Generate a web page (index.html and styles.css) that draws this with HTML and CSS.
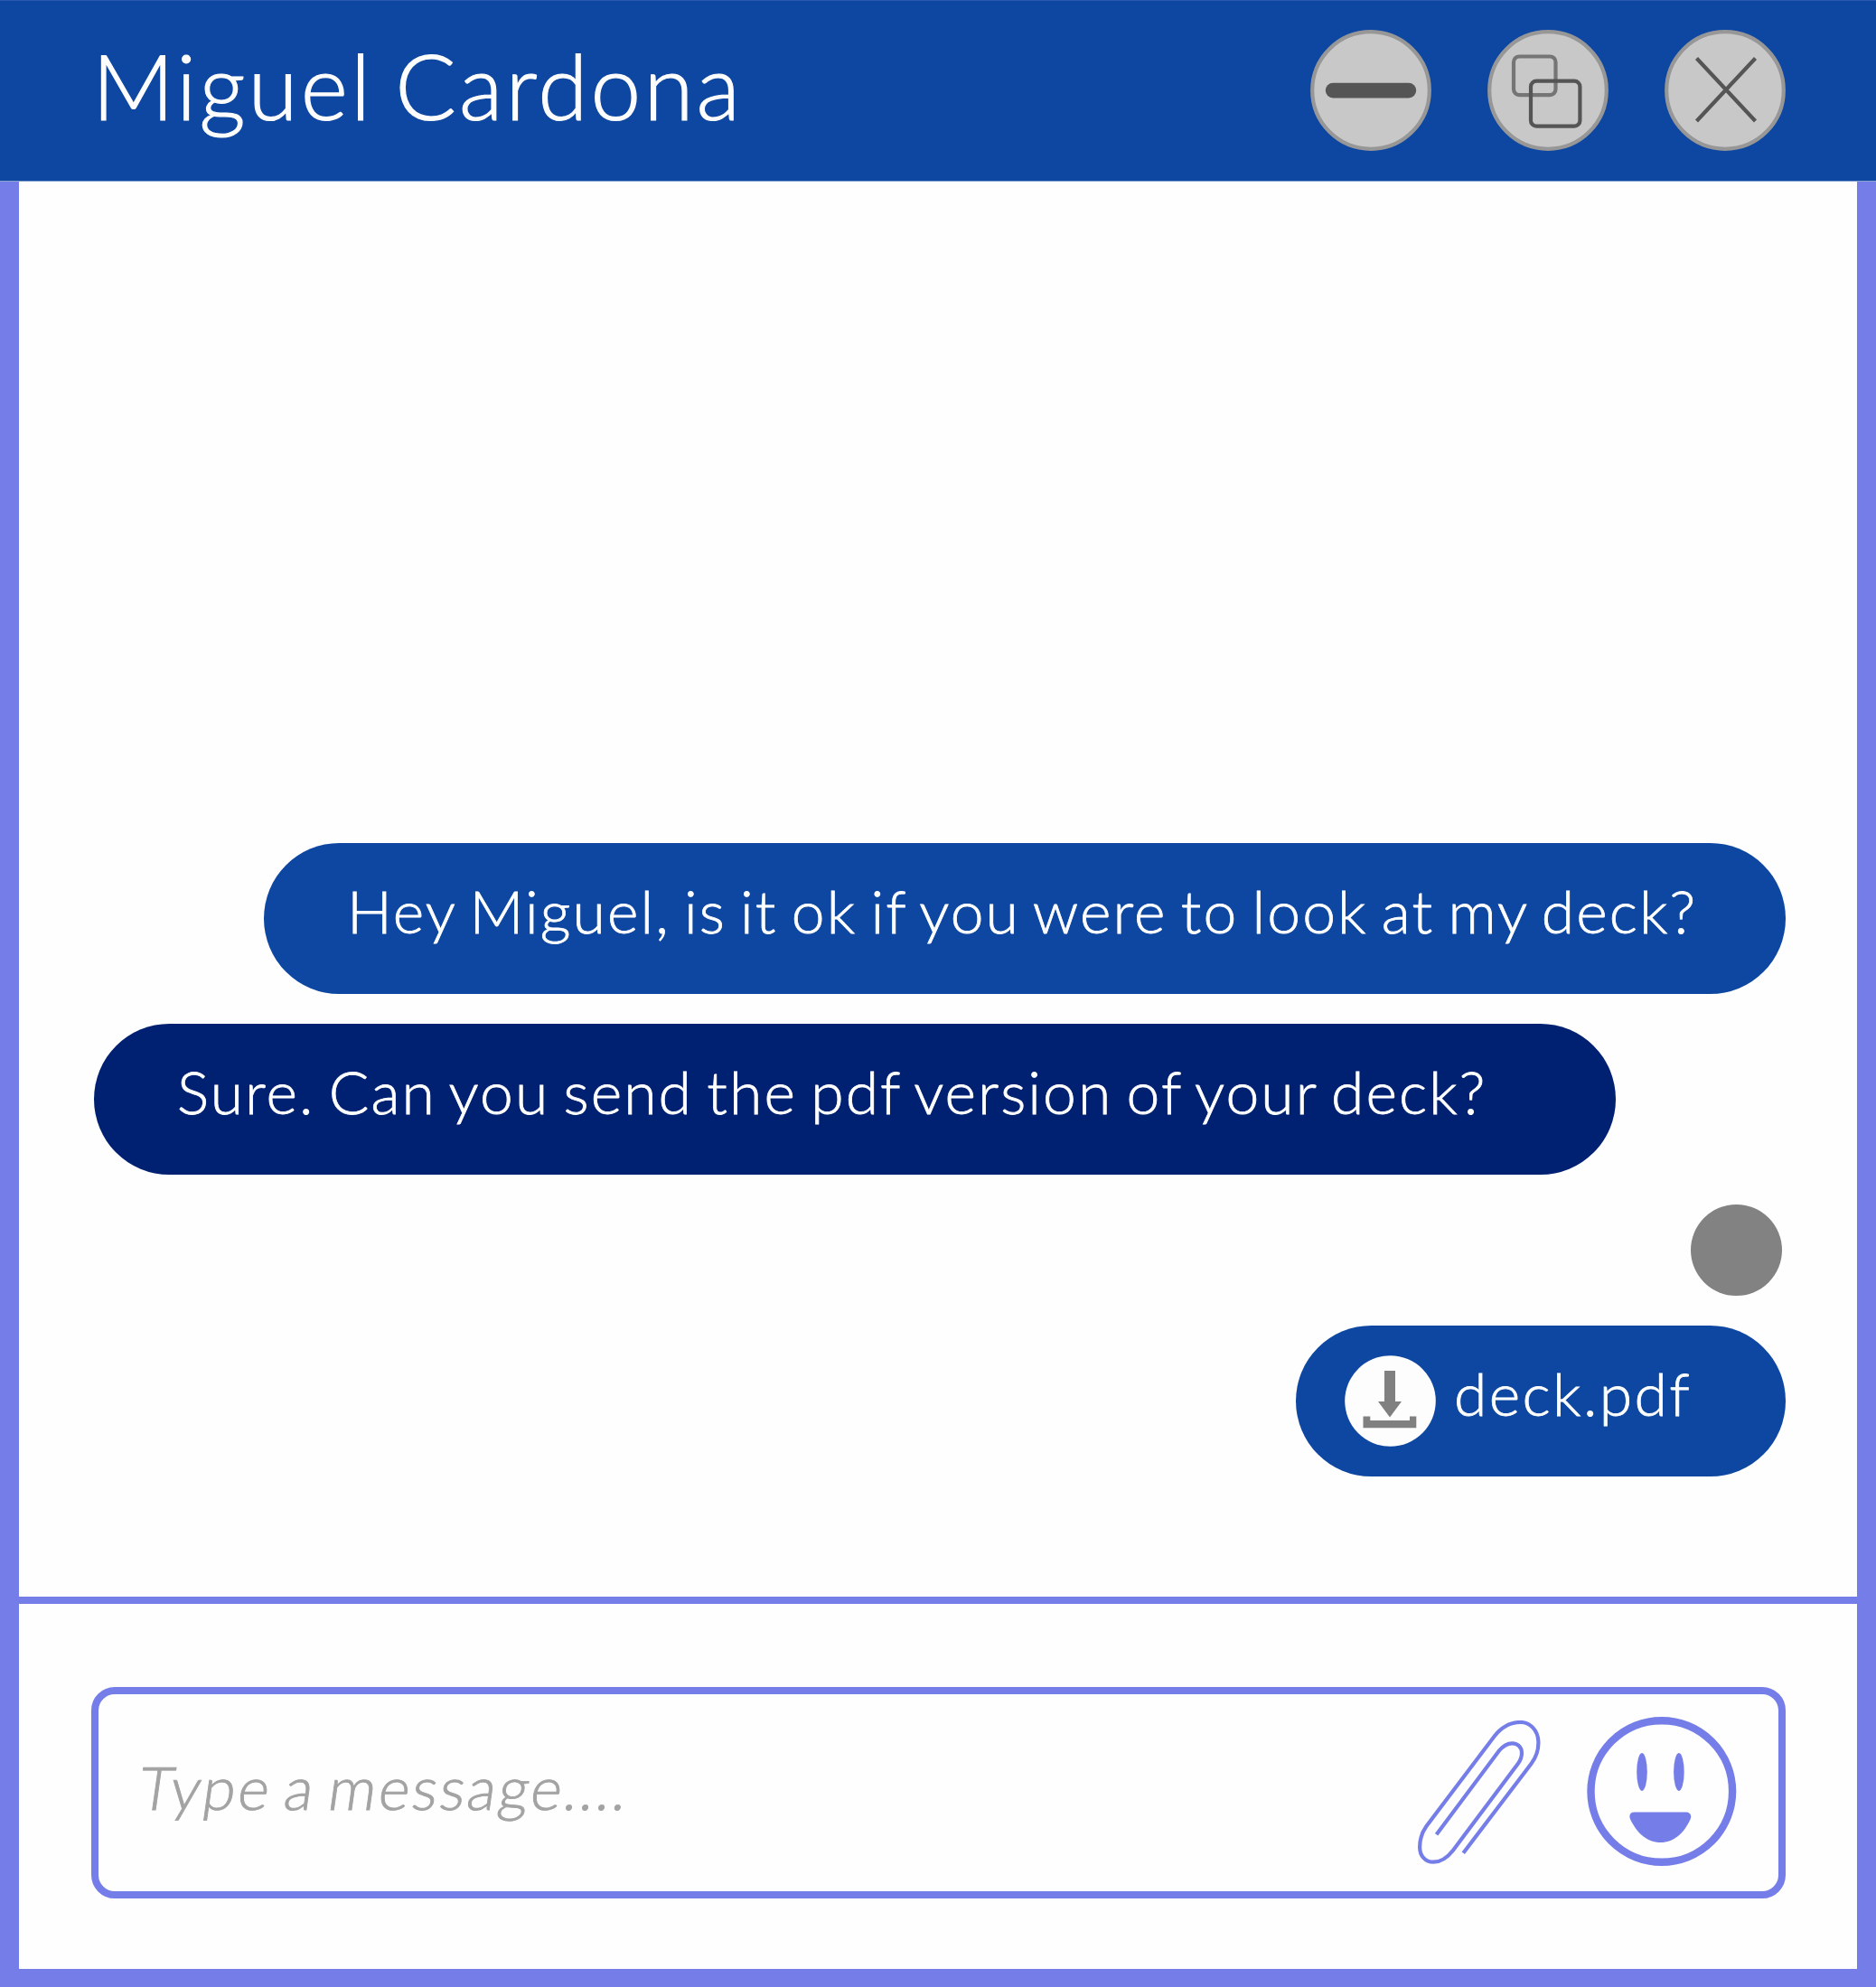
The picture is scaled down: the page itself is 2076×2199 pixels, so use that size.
FILE: index.html
```html
<!DOCTYPE html>
<html lang="en">
<head>
<meta charset="utf-8">
<title>Chat - Miguel Cardona</title>
<link rel="stylesheet" href="styles.css">
</head>
<body>
<div class="chat">
  <header class="titlebar">
    <h1 class="contact">Miguel Cardona</h1>
    <div class="controls">
      <svg class="control" viewBox="0 0 134 134">
        <circle class="disc" cx="67" cy="67" r="64.8"/>
        <rect class="bar" x="16.8" y="58.8" width="100.4" height="16.6" rx="8.3"/>
      </svg>
      <svg class="control" viewBox="0 0 134 134">
        <circle class="disc" cx="67" cy="67" r="64.8"/>
        <rect class="line back" x="29" y="29.5" width="46.5" height="42.6" rx="6.3"/>
        <rect class="line" x="48" y="56.7" width="54.4" height="50" rx="6.3"/>
      </svg>
      <svg class="control" viewBox="0 0 134 134">
        <circle class="disc" cx="67" cy="67" r="64.8"/>
        <path class="line" d="M35.5 31.5 100.5 101M100.5 31.5 35.5 101"/>
      </svg>
    </div>
  </header>
  <main class="messages">
    <p class="bubble sent"><span class="text">Hey Miguel, is it ok if you were to look at my deck?</span></p>
    <p class="bubble received"><span class="text">Sure. Can you send the pdf version of your deck?</span></p>
    <div class="avatar"></div>
    <div class="bubble file">
      <svg class="download" viewBox="0 0 101 101">
        <circle cx="50.5" cy="50.5" r="50.3" fill="#fdfdfd"/>
        <path fill="#808080" d="M44 17H56V51H63L50 68.5 37 51H44ZM20.5 67.5H28.3V72H72V67.5H79.3V80.3H20.5Z"/>
      </svg>
      <span class="text name">deck.pdf</span>
    </div>
  </main>
  <footer class="composer">
    <div class="field">
      <span class="placeholder">Type a message....</span>
      <svg class="clip" viewBox="0 0 136 160">
        <path d="M50.3 146.7 125.6 47.7C131.8 39.5 133.6 31.5 133.4 23.7 133 10.5 124 2 113.6 2 103 2 92.5 7.500 84.500 17.700L9.300 117.300C4.500 124 2.100 131.500 2.100 140.300 2.100 150 8.300 156.700 17.200 156.700 25.500 156.700 32.500 152 39 143.700L110.900 47.700C113.800 43.800 115 40.500 115 36 115 29.500 110.500 25.300 104.400 25.300 98.500 25.300 94 28.500 89.700 33.700L20.600 126.300"/>
      </svg>
      <svg class="smiley" viewBox="0 0 166 166">
        <circle cx="82.800" cy="82.500" r="78.300" fill="none" stroke="#757de8" stroke-width="8.400"/>
        <ellipse cx="61" cy="61" rx="5.800" ry="20.900"/>
        <ellipse cx="101.900" cy="61" rx="5.800" ry="20.900"/>
        <path d="M52.500 105.500H109.500C114 105.500 116.500 109 114.500 113.500 107.500 129 96 139 81.500 139 67 139 55.500 129 48.200 113.500 46.200 109 48 105.500 52.500 105.500Z"/>
      </svg>
    </div>
  </footer>
</div>
</body>
</html>
```
FILE: styles.css
```css
* {
  box-sizing: border-box;
}

body {
  margin: 0;
  font-family: Lato, "Open Sans", sans-serif;
  font-weight: 300;
  background: #fefefe;
}

.chat {
  display: flex;
  flex-direction: column;
  width: 2076px;
  height: 2199px;
}

.titlebar {
  display: flex;
  align-items: center;
  justify-content: space-between;
  height: 201px;
  padding: 0 100px 0 102px;
  background: #0d47a1;
  border-top: 1px solid #2a58af;
  border-bottom: 1px solid #86a3d0;
}

.contact {
  margin: 0;
  padding-bottom: 13px;
  color: #fdfdfd;
  font-size: 100px;
  font-weight: 300;
  line-height: 120px;
  letter-spacing: 3.1px;
  word-spacing: -6px;
  white-space: nowrap;
  -webkit-text-stroke: 1.2px #fdfdfd;
}

.controls {
  display: flex;
  gap: 62px;
  padding-bottom: 1px;
}

.control {
  width: 134px;
  height: 134px;
}

.disc {
  fill: #c8c8c8;
  stroke: #979797;
  stroke-width: 4.2px;
}

.bar {
  fill: #555;
}

.line {
  fill: none;
  stroke: #555;
  stroke-width: 4.2px;
}

.back {
  stroke: #757575;
}

.messages {
  display: flex;
  flex: 1;
  flex-direction: column;
  justify-content: flex-end;
  padding: 0 79px 133px 83px;
  border: solid #757de8;
  border-width: 0 21px;
}

.bubble {
  display: flex;
  height: 167px;
  margin: 0;
  border-radius: 84px;
  background: #0d47a1;
  color: #fff;
}

.sent {
  align-self: flex-end;
  width: 1684px;
  margin-bottom: 33px;
  padding-left: 92px;
}

.received {
  width: 1684px;
  margin-bottom: 33px;
  padding-left: 92px;
  background: #002171;
}

.text {
  font-size: 66px;
  line-height: 150px;
  letter-spacing: 2.1px;
  word-spacing: -4.8px;
  white-space: nowrap;
  -webkit-text-stroke: 0.8px #fff;
}

.avatar {
  align-self: flex-end;
  width: 101px;
  height: 101px;
  margin: 0 4px 33px 0;
  border-radius: 50%;
  background: #828282;
}

.file {
  align-self: flex-end;
  align-items: center;
  width: 542px;
  padding-left: 54px;
}

.download {
  width: 101px;
  height: 101px;
  margin-right: 20px;
}

.name {
  height: 167px;
  color: #fdfdfd;
  letter-spacing: 2.4px;
}

.composer {
  height: 432px;
  padding: 92px 79px 78px 80px;
  border: solid #757de8;
  border-width: 8px 21px 20px;
}

.field {
  display: flex;
  justify-content: space-between;
  height: 234px;
  padding: 0 46px 0 45px;
  border: 8px solid #757de8;
  border-radius: 26px;
}

.placeholder {
  margin-right: auto;
  color: #a3a3a3;
  font-size: 66px;
  line-height: 206px;
  letter-spacing: 2.5px;
  word-spacing: -6px;
  transform: skewX(-8deg);
  -webkit-text-stroke: 0.9px #a3a3a3;
}

.clip {
  width: 136px;
  height: 160px;
  margin: 29px 51px 0 0;
  fill: none;
  stroke: #757de8;
  stroke-width: 4.2px;
}

.smiley {
  width: 166px;
  height: 166px;
  margin-top: 25px;
  fill: #757de8;
}
```
